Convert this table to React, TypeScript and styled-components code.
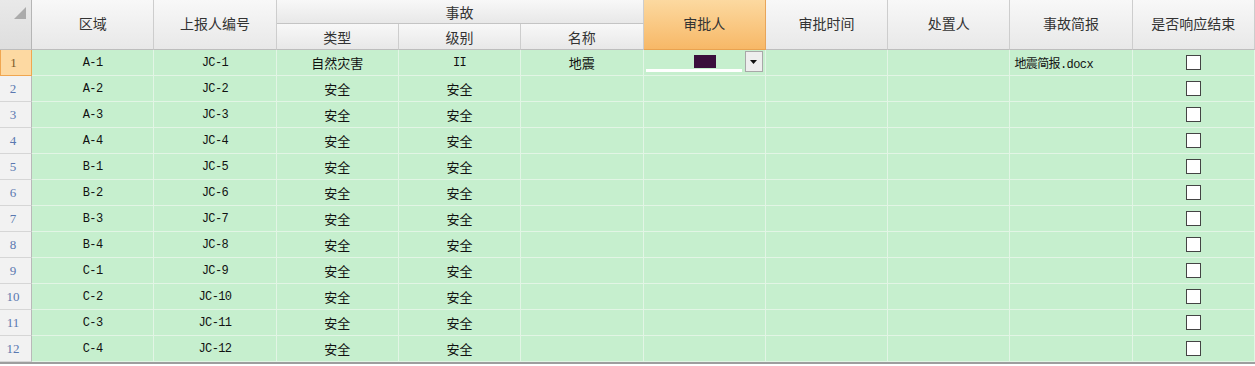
import React from 'react';
import styled, { createGlobalStyle, css } from 'styled-components';

const GlobalStyle = createGlobalStyle`
  html, body {
    margin: 0;
    padding: 0;
    background: #ffffff;
    overflow: hidden;
  }
  * {
    box-sizing: border-box;
  }
`;

interface RowData {
  area: string;
  code: string;
  type: string;
  level: string;
  name?: string;
  report?: string;
}

const rows: RowData[] = [
  { area: 'A-1', code: 'JC-1', type: '自然灾害', level: 'II', name: '地震', report: '地震简报.docx' },
  { area: 'A-2', code: 'JC-2', type: '安全', level: '安全' },
  { area: 'A-3', code: 'JC-3', type: '安全', level: '安全' },
  { area: 'A-4', code: 'JC-4', type: '安全', level: '安全' },
  { area: 'B-1', code: 'JC-5', type: '安全', level: '安全' },
  { area: 'B-2', code: 'JC-6', type: '安全', level: '安全' },
  { area: 'B-3', code: 'JC-7', type: '安全', level: '安全' },
  { area: 'B-4', code: 'JC-8', type: '安全', level: '安全' },
  { area: 'C-1', code: 'JC-9', type: '安全', level: '安全' },
  { area: 'C-2', code: 'JC-10', type: '安全', level: '安全' },
  { area: 'C-3', code: 'JC-11', type: '安全', level: '安全' },
  { area: 'C-4', code: 'JC-12', type: '安全', level: '安全' },
];

const mainHeaders = ['审批人', '审批时间', '处置人', '事故简报', '是否响应结束'];

const App: React.FC = () => {
  return (
    <>
      <GlobalStyle />
      <Sheet>
        <Header>
          <Corner>
            <CornerMark />
          </Corner>
          <HeadCell $span>区域</HeadCell>
          <HeadCell $span>上报人编号</HeadCell>
          <GroupCell>事故</GroupCell>
          {mainHeaders.map((h, i) => (
            <HeadCell key={h} $span $active={i === 0}>
              {h}
            </HeadCell>
          ))}
          <SubCell>类型</SubCell>
          <SubCell>级别</SubCell>
          <SubCell>名称</SubCell>
        </Header>
        {rows.map((r, i) => (
          <Row key={r.code}>
            <RowNum $active={i === 0}>{i + 1}</RowNum>
            <Cell>{r.area}</Cell>
            <Cell>{r.code}</Cell>
            <Cell $cjk>{r.type}</Cell>
            <Cell $cjk={r.level !== 'II'}>{r.level}</Cell>
            <Cell $cjk>{r.name}</Cell>
            <Cell>
              {i === 0 && (
                <Picker>
                  <Swatch />
                  <PickerLine />
                  <DropButton>
                    <svg width="7" height="4" viewBox="0 0 7 4">
                      <path d="M0 0h7L3.5 4z" fill="#111" />
                    </svg>
                  </DropButton>
                </Picker>
              )}
            </Cell>
            <Cell />
            <Cell />
            <Cell $left>{r.report}</Cell>
            <Cell>
              <CheckBox />
            </Cell>
          </Row>
        ))}
      </Sheet>
    </>
  );
};

export default App;

const columns = '32px repeat(10, 1fr)';

const Sheet = styled.div`
  width: 1255px;
  border-bottom: 2px solid #9e9e9e;
  background: #c6efce;
`;

const Header = styled.div`
  display: grid;
  grid-template-columns: ${columns};
  grid-template-rows: 24px 26px;
  height: 50px;
  font-family: 'Noto Sans CJK SC', 'Noto Sans', sans-serif;
  font-size: 14px;
  color: #333;
  background: #ffffff;
`;

const headBg = css`
  background: linear-gradient(#f8f8f8, #e8e8e8);
  border-right: 1px solid #cdcdcd;
  border-bottom: 1px solid #bdbdbd;
  display: flex;
  align-items: center;
  justify-content: center;
`;

const Corner = styled.div`
  ${headBg};
  grid-row: 1 / 3;
  grid-column: 1;
  background: linear-gradient(#e9e9e9, #dedede);
  border-right: 1px solid #b5b5b5;
  position: relative;
`;

const CornerMark = styled.div`
  position: absolute;
  right: 5px;
  top: 7px;
  width: 0;
  height: 0;
  border-left: 12px solid transparent;
  border-bottom: 12px solid #ababab;
`;

const HeadCell = styled.div<{ $span?: boolean; $active?: boolean }>`
  ${headBg};
  padding-bottom: 4px;
  ${(p) => p.$span && css`grid-row: 1 / 3;`}
  ${(p) =>
    p.$active &&
    css`
      background: linear-gradient(#fcd9a0, #f7b867);
      border-right: 1px solid #e8a55a;
      border-bottom: 1px solid #e9a250;
    `}
`;

const GroupCell = styled.div`
  ${headBg};
  grid-column: 4 / 7;
  grid-row: 1;
  border-bottom: 1px solid #c4c4c4;
`;

const SubCell = styled.div`
  ${headBg};
  grid-row: 2;
`;

const Row = styled.div`
  display: grid;
  grid-template-columns: ${columns};
  height: 26px;
  font-family: 'Liberation Mono', 'Noto Sans CJK SC', monospace;
  font-size: 12px;
  letter-spacing: -0.6px;
  color: #111;
`;

const RowNum = styled.div<{ $active?: boolean }>`
  display: flex;
  align-items: center;
  justify-content: center;
  padding-right: 5px;
  background: #f2f2f2;
  color: #5a78b0;
  font-family: 'Liberation Serif', serif;
  font-size: 13px;
  letter-spacing: 0;
  border-right: 1px solid #b9b9b9;
  border-bottom: 1px solid #d6d6d6;
  ${(p) =>
    p.$active &&
    css`
      background: #fdd9a2;
      color: #7a5a2a;
      border: 1px solid #f0a650;
      border-top: none;
    `}
`;

const Cell = styled.div<{ $cjk?: boolean; $left?: boolean }>`
  display: flex;
  align-items: center;
  justify-content: ${(p) => (p.$left ? 'flex-start' : 'center')};
  padding-left: ${(p) => (p.$left ? '4px' : '0')};
  border-right: 1px solid #e2f5e5;
  border-bottom: 1px solid #e2f5e5;
  position: relative;
  white-space: nowrap;
  ${(p) =>
    p.$cjk &&
    css`
      font-family: 'Noto Sans CJK SC', sans-serif;
      font-size: 13px;
      letter-spacing: 0;
    `}
`;

const Picker = styled.div`
  position: absolute;
  inset: 0;
`;

const Swatch = styled.div`
  position: absolute;
  left: 50px;
  top: 5px;
  width: 22px;
  height: 13px;
  background: #3a0f3c;
`;

const PickerLine = styled.div`
  position: absolute;
  left: 2px;
  top: 19px;
  width: 96px;
  height: 3px;
  background: #ffffff;
`;

const DropButton = styled.div`
  position: absolute;
  right: 2px;
  top: 1px;
  width: 18px;
  height: 21px;
  border: 1px solid #a8a8a8;
  background: #eeeeee;
  display: flex;
  align-items: center;
  justify-content: center;
`;

const CheckBox = styled.div`
  width: 15px;
  height: 15px;
  background: #ffffff;
  border: 1px solid #444;
`;
